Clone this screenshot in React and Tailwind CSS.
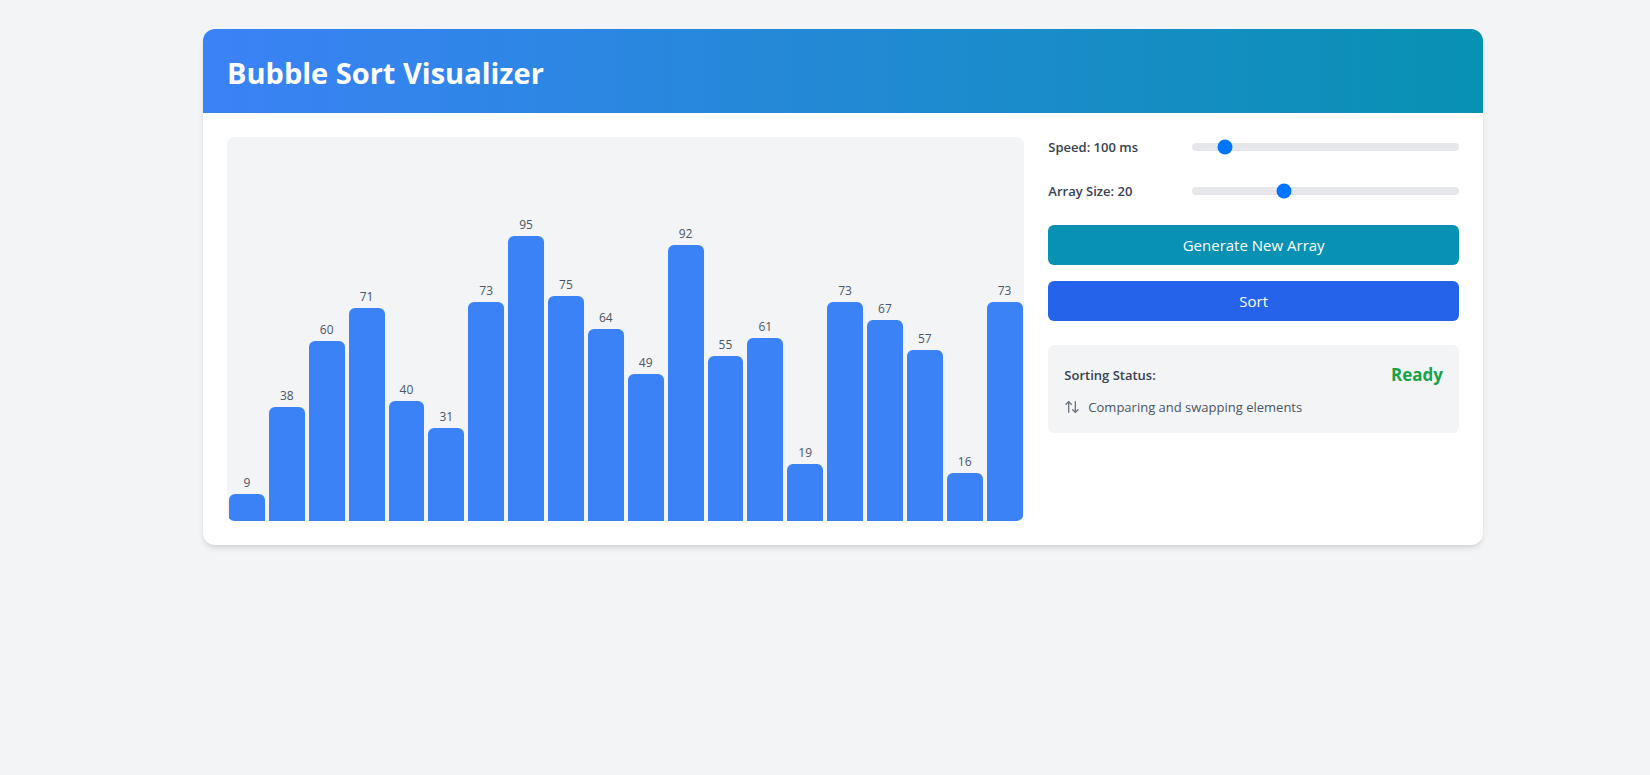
import { useState } from "react";
import { ArrowUpDown } from "lucide-react";

const INITIAL = [9, 38, 60, 71, 40, 31, 73, 95, 75, 64, 49, 92, 55, 61, 19, 73, 67, 57, 16, 73];

const randomArray = (size) =>
  Array.from({ length: size }, () => Math.floor(Math.random() * 100) + 1);

function Bar({ value }) {
  return (
    <div
      className="relative mx-[2px] flex-1 rounded-t-md bg-[#3b82f6]"
      style={{ height: `${value * 3}px` }}
    >
      <span className="absolute inset-x-0 -top-5 text-center text-[12px] leading-[18px] text-[#4b5563]">
        {value}
      </span>
    </div>
  );
}

function Slider({ id, label, min, max, value, onChange }) {
  return (
    <div className="flex items-center">
      <label htmlFor={id} className="w-36 shrink-0 text-[13px] leading-5 font-semibold text-[#374151]">
        {label}
      </label>
      <input
        id={id}
        type="range"
        min={min}
        max={max}
        value={value}
        onChange={(e) => onChange(Number(e.target.value))}
        className="h-2 min-w-0 flex-1 cursor-pointer appearance-none rounded-lg bg-[#e5e7eb]"
      />
    </div>
  );
}

export default function App() {
  const [array, setArray] = useState(INITIAL);
  const [speed, setSpeed] = useState(100);
  const [sorting, setSorting] = useState(false);

  const resize = (size) => setArray(randomArray(size));

  const sort = async () => {
    setSorting(true);
    const next = [...array];
    for (let i = 0; i < next.length - 1; i++) {
      for (let j = 0; j < next.length - i - 1; j++) {
        if (next[j] > next[j + 1]) {
          [next[j], next[j + 1]] = [next[j + 1], next[j]];
          setArray([...next]);
          await new Promise((done) => setTimeout(done, speed));
        }
      }
    }
    setSorting(false);
  };

  return (
    <div className="min-h-screen bg-[#f3f4f6] pt-[29px] pr-4 pl-[52px] font-['Open_Sans','Noto_Sans',sans-serif]">
      <main className="mx-auto max-w-7xl overflow-hidden rounded-xl bg-white shadow-md">
        <header className="bg-[linear-gradient(to_right,#3b82f6,#0891b2)] px-6 pt-[26px] pb-[22px]">
          <h1 className="text-[29px] leading-9 font-bold text-white">Bubble Sort Visualizer</h1>
        </header>
        <div className="flex gap-6 p-6">
          <section className="flex h-96 min-w-0 flex-1 items-end overflow-hidden rounded-lg bg-[#f3f4f6]">
            {array.map((value, i) => (
              <Bar key={i} value={value} />
            ))}
          </section>
          <section className="flex w-1/3 shrink-0 flex-col gap-6">
            <Slider id="speed" label={`Speed: ${speed} ms`} min={1} max={1000} value={speed} onChange={setSpeed} />
            <Slider id="size" label={`Array Size: ${array.length}`} min={5} max={50} value={array.length} onChange={resize} />
            <div className="flex flex-col gap-4">
              <button
                type="button"
                disabled={sorting}
                onClick={() => resize(array.length)}
                className="rounded-md bg-[#0891b2] px-4 py-2 text-[15px] leading-6 text-white"
              >
                Generate New Array
              </button>
              <button
                type="button"
                disabled={sorting}
                onClick={sort}
                className="rounded-md bg-[#2563eb] px-4 py-2 text-[15px] leading-6 text-white"
              >
                Sort
              </button>
            </div>
            <div className="flex flex-col gap-2 rounded-md bg-[#f3f4f6] p-4">
              <div className="flex items-center justify-between">
                <span className="text-[13px] leading-5 font-semibold text-[#374151]">Sorting Status:</span>
                <span className="text-[17px] leading-7 font-bold text-[#16a34a]">{sorting ? "Sorting" : "Ready"}</span>
              </div>
              <div className="flex items-center gap-2">
                <ArrowUpDown size={16} className="text-[#6b7280]" />
                <span className="text-[13px] leading-5 text-[#4b5563]">Comparing and swapping elements</span>
              </div>
            </div>
          </section>
        </div>
      </main>
    </div>
  );
}
